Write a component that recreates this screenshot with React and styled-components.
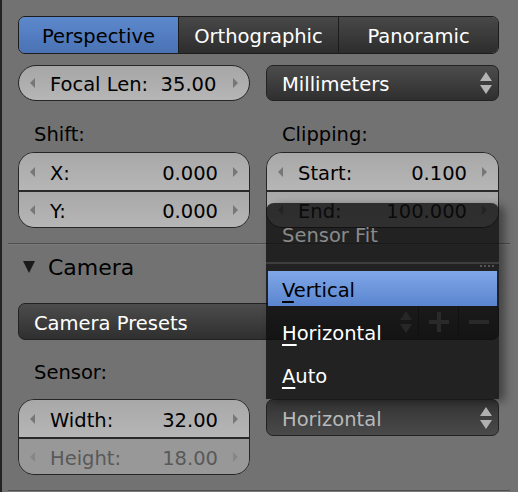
import styled, { createGlobalStyle } from 'styled-components';

const GlobalStyle = createGlobalStyle`
  html, body {
    margin: 0;
    padding: 0;
    background: #727272;
  }
  body {
    font-family: "DejaVu Sans", "Liberation Sans", sans-serif;
  }
`;

const StFrame = styled.div`
  position: relative;
  width: 518px;
  height: 492px;
  box-sizing: border-box;
  border-left: 2px solid #222;
  background: #727272;
  overflow: hidden;
  font-family: "DejaVu Sans", "Liberation Sans", sans-serif;
  font-size: 19.5px;
  color: #000;
`;

const StSection = styled.div`
  display: flex;
  flex-direction: column;
  padding: ${(p) => p.$pad};
`;

const StTabs = styled.div`
  display: flex;
  height: 38px;
  box-sizing: border-box;
  border: 1px solid #1c1c1c;
  border-radius: 7px;
  overflow: hidden;
`;

const StTab = styled.div`
  flex: 1;
  display: flex;
  align-items: center;
  justify-content: center;
  padding-top: 3px;
  color: ${(p) => (p.$active ? '#000' : '#fff')};
  background: ${(p) =>
    p.$active
      ? 'linear-gradient(#5c89cc, #4a72b5)'
      : 'linear-gradient(#484848, #2d2d2d)'};
  & + & {
    border-left: 1px solid #1c1c1c;
  }
`;

const StGrid = styled.div`
  display: grid;
  grid-template-columns: 232px 233px;
  column-gap: 16px;
  margin-top: ${(p) => p.$top || 0}px;
`;

const StColumn = styled.div`
  display: flex;
  flex-direction: column;
`;

const StLabel = styled.div`
  height: 24px;
  line-height: 24px;
  padding-left: 16px;
  margin: ${(p) => p.$margin};
`;

const StNumField = styled.div`
  display: flex;
  align-items: center;
  height: ${(p) => p.$h || 36}px;
  box-sizing: border-box;
  padding: 3px 11px 0;
  border: 1px solid #262626;
  border-radius: 18px;
  background: linear-gradient(#a6a6a6, #b6b6b6);
`;

const StGroup = styled.div`
  display: flex;
  flex-direction: column;
  box-sizing: border-box;
  border: 1px solid #262626;
  border-radius: 16px;
  overflow: hidden;
`;

const StGroupRow = styled.div`
  display: flex;
  align-items: center;
  height: 37px;
  box-sizing: border-box;
  padding: 3px 11px 0;
  color: ${(p) => (p.$disabled ? '#595959' : '#000')};
  background: ${(p) =>
    p.$disabled ? '#989898' : 'linear-gradient(#a8a8a8, #b6b6b6)'};
  & + & {
    border-top: 2px solid #2a2a2a;
  }
`;

const StArrow = styled.svg`
  flex: none;
  width: 5px;
  height: 10px;
  margin-top: -3px;
  fill: ${(p) => (p.$disabled ? '#868686' : '#777')};
  margin-left: ${(p) => (p.$right ? '15px' : '0')};
  margin-right: ${(p) => (p.$right ? '0' : '15px')};
`;

const StValue = styled.span`
  margin-left: auto;
`;

const StDropdown = styled.div`
  display: flex;
  align-items: center;
  height: ${(p) => p.$h || 36}px;
  box-sizing: border-box;
  padding: 3px 6px 0 15px;
  border: 1px solid #222;
  border-radius: 7px;
  color: ${(p) => (p.$open ? '#b8b8b8' : '#fff')};
  background: ${(p) =>
    p.$open
      ? 'linear-gradient(#333, #4a4a4a)'
      : 'linear-gradient(#4c4c4c, #2f2f2f)'};
`;

const StUpDown = styled.svg`
  flex: none;
  margin: -3px 0 0 auto;
  width: 12px;
  height: 24px;
  fill: ${(p) => p.$color || '#b4b4b4'};
`;

const StSeparator = styled.div`
  margin: 0 8px 0 6px;
  height: 1px;
  background: #4e4e4e;
  border-bottom: 1px solid #7a7a7a;
`;

const StHeader = styled.div`
  display: flex;
  align-items: center;
  gap: 13px;
  height: 44px;
  padding-left: 21px;
  font-size: 22px;
`;

const StPresetRow = styled.div`
  display: flex;
  height: 37px;
  box-sizing: border-box;
  border: 1px solid #222;
  border-radius: 7px;
  overflow: hidden;
  background: linear-gradient(#4c4c4c, #2f2f2f);
  color: #fff;
`;

const StPresetMain = styled.div`
  flex: 1;
  display: flex;
  align-items: center;
  padding: 3px 6px 0 15px;
`;

const StToolButton = styled.div`
  width: 39px;
  display: flex;
  align-items: center;
  justify-content: center;
  border-left: 1px solid #222;
`;

const StAnchor = styled.div`
  position: relative;
`;

const StMenu = styled.div`
  position: absolute;
  left: 0;
  right: 0;
  bottom: 100%;
  z-index: 10;
  display: flex;
  flex-direction: column;
  padding: 0 2px 7px;
  border-radius: 8px 8px 0 0;
  background: rgba(14, 14, 14, 0.8);
  box-shadow: 6px 2px 9px rgba(0, 0, 0, 0.4);
`;

const StMenuTitle = styled.div`
  height: 26px;
  line-height: 26px;
  margin-top: 20px;
  padding-left: 14px;
  color: #8a8a8a;
`;

const StMenuSep = styled.div`
  position: relative;
  height: 2px;
  margin: 13px -2px 7px;
  background: #3e3e3e;
`;

const StGrip = styled.div`
  position: absolute;
  right: 3px;
  top: 3px;
  width: 16px;
  height: 2px;
  background: repeating-linear-gradient(90deg, #555 0 2px, transparent 2px 4px);
`;

const StMenuItem = styled.div`
  display: flex;
  align-items: center;
  height: 35px;
  padding: 3px 0 0 14px;
  box-sizing: border-box;
  color: ${(p) => (p.$active ? '#000' : '#fff')};
  background: ${(p) =>
    p.$active ? 'linear-gradient(#80a7e8, #5a85cf)' : 'transparent'};
  & + & {
    margin-top: 8px;
  }
  u {
    text-underline-offset: 4px;
    text-decoration-thickness: 1.5px;
  }
`;

const ArrowLeft = ({ disabled }) => (
  <StArrow viewBox="0 0 5 10" $disabled={disabled}>
    <polygon points="5,0 5,10 0,5" />
  </StArrow>
);

const ArrowRight = ({ disabled }) => (
  <StArrow viewBox="0 0 5 10" $right $disabled={disabled}>
    <polygon points="0,0 5,5 0,10" />
  </StArrow>
);

const UpDown = ({ color }) => (
  <StUpDown viewBox="0 0 12 24" $color={color}>
    <polygon points="6,1 12,10 0,10" />
    <polygon points="0,14 12,14 6,23" />
  </StUpDown>
);

const NumRow = ({ label, value, disabled }) => (
  <StGroupRow $disabled={disabled}>
    <ArrowLeft disabled={disabled} />
    <span>{label}</span>
    <StValue>{value}</StValue>
    <ArrowRight disabled={disabled} />
  </StGroupRow>
);

const App = () => {
  return (
    <StFrame>
      <GlobalStyle />
      <StSection $pad="16px 19px 15px 16px">
        <StTabs>
          <StTab $active>Perspective</StTab>
          <StTab>Orthographic</StTab>
          <StTab>Panoramic</StTab>
        </StTabs>

        <StGrid $top={11}>
          <StNumField>
            <ArrowLeft />
            <span>Focal Len:&nbsp; 35.00</span>
            <StValue />
            <ArrowRight />
          </StNumField>
          <StDropdown>
            Millimeters
            <UpDown />
          </StDropdown>
        </StGrid>

        <StGrid>
          <StColumn>
            <StLabel $margin="22px 0 5px">Shift:</StLabel>
            <StGroup>
              <NumRow label="X:" value="0.000" />
              <NumRow label="Y:" value="0.000" />
            </StGroup>
          </StColumn>
          <StColumn>
            <StLabel $margin="22px 0 5px">Clipping:</StLabel>
            <StGroup>
              <NumRow label="Start:" value="0.100" />
              <NumRow label="End:" value="100.000" />
            </StGroup>
          </StColumn>
        </StGrid>
      </StSection>

      <StSeparator />

      <StHeader>
        <svg width="12" height="12" viewBox="0 0 12 12">
          <polygon points="0,0 12,0 6,12" fill="#1a1a1a" />
        </svg>
        <span>Camera</span>
      </StHeader>

      <StSection $pad="14px 19px 15px 16px">
        <StPresetRow>
          <StPresetMain>
            Camera Presets
            <UpDown color="#8a8a8a" />
          </StPresetMain>
          <StToolButton>
            <svg width="22" height="22" viewBox="0 0 22 22">
              <path d="M11 1v20M1 11h20" stroke="#9a9a9a" strokeWidth="4" />
            </svg>
          </StToolButton>
          <StToolButton>
            <svg width="22" height="22" viewBox="0 0 22 22">
              <path d="M1 11h20" stroke="#9a9a9a" strokeWidth="4" />
            </svg>
          </StToolButton>
        </StPresetRow>

        <StGrid>
          <StColumn>
            <StLabel $margin="21px 0 14px">Sensor:</StLabel>
            <StGroup>
              <NumRow label="Width:" value="32.00" />
              <NumRow label="Height:" value="18.00" disabled />
            </StGroup>
          </StColumn>
          <StColumn>
            <StLabel $margin="21px 0 14px" />
            <StAnchor>
              <StMenu>
                <StMenuTitle>Sensor Fit</StMenuTitle>
                <StMenuSep>
                  <StGrip />
                </StMenuSep>
                <StMenuItem $active>
                  <span>
                    <u>V</u>ertical
                  </span>
                </StMenuItem>
                <StMenuItem>
                  <span>
                    <u>H</u>orizontal
                  </span>
                </StMenuItem>
                <StMenuItem>
                  <span>
                    <u>A</u>uto
                  </span>
                </StMenuItem>
              </StMenu>
              <StDropdown $open $h={37}>
                Horizontal
                <UpDown color="#b0b0b0" />
              </StDropdown>
            </StAnchor>
          </StColumn>
        </StGrid>
      </StSection>

      <StSeparator />
    </StFrame>
  );
};

export default App;
